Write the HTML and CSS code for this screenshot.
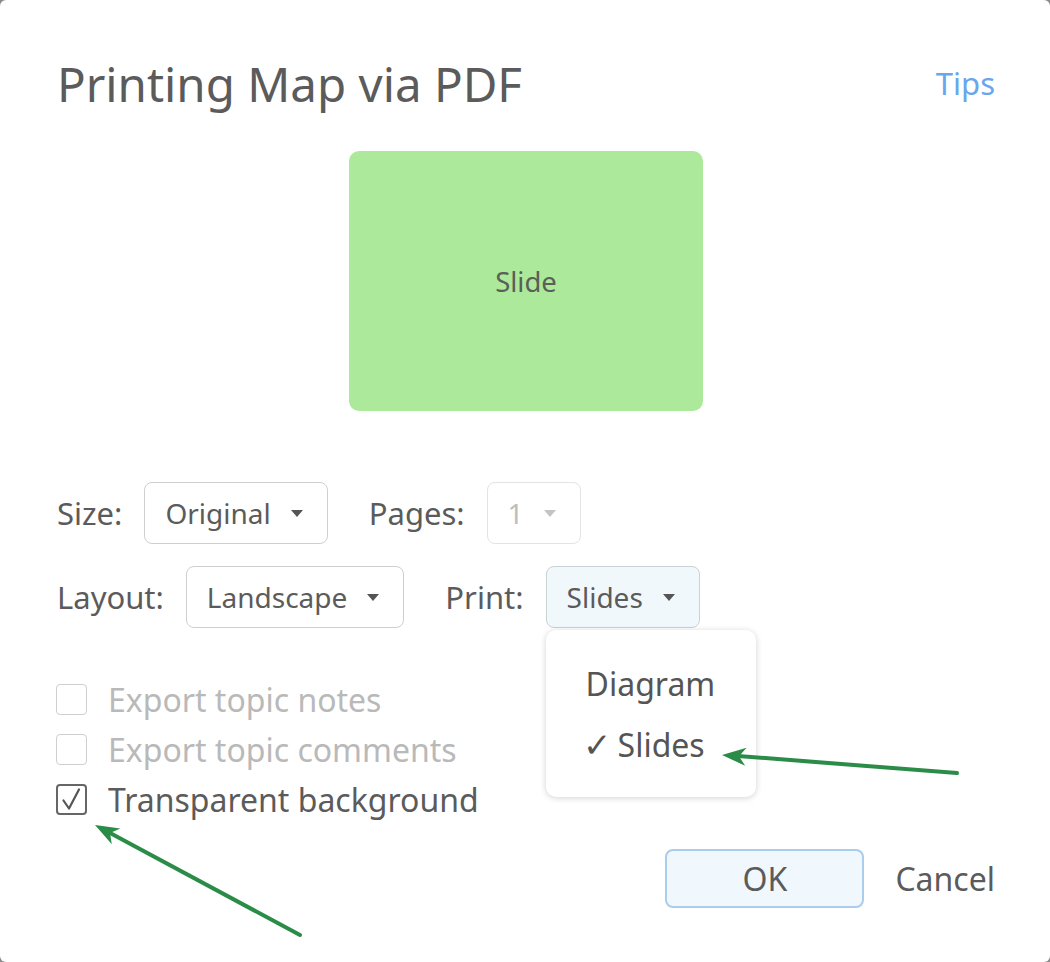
FILE: index.html
```html
<!DOCTYPE html>
<html>
<head>
<meta charset="utf-8">
<link rel="stylesheet" href="styles.css">
</head>
<body>
<div class="dialog">
  <div class="header">
    <h1 class="title">Printing Map via PDF</h1>
    <a class="tips">Tips</a>
  </div>
  <div class="preview">
    <div class="slide">Slide</div>
  </div>
  <div class="options">
    <div class="row">
      <div class="field">
        <span class="label">Size:</span>
        <div class="select select-size"><span>Original</span><i class="caret"></i></div>
      </div>
      <div class="field">
        <span class="label">Pages:</span>
        <div class="select select-pages disabled"><span>1</span><i class="caret"></i></div>
      </div>
    </div>
    <div class="row">
      <div class="field">
        <span class="label">Layout:</span>
        <div class="select select-layout"><span>Landscape</span><i class="caret"></i></div>
      </div>
      <div class="field">
        <span class="label">Print:</span>
        <div class="select-wrap">
          <div class="select select-print active"><span>Slides</span><i class="caret"></i></div>
          <div class="menu">
            <div class="menu-item">Diagram</div>
            <div class="menu-item"><span class="check">✓</span>Slides</div>
          </div>
        </div>
      </div>
    </div>
  </div>
  <div class="checks">
    <label class="check-row disabled"><span class="box"></span>Export topic notes</label>
    <label class="check-row disabled"><span class="box"></span>Export topic comments</label>
    <label class="check-row"><span class="box checked"><svg width="31" height="31" viewBox="0 0 31 31"><path d="M7.5 16.5 L13 24.5 L23 5.5" fill="none" stroke="#555" stroke-width="2.2" stroke-linecap="round" stroke-linejoin="round"/></svg></span>Transparent background</label>
  </div>
  <div class="footer">
    <button class="btn btn-ok">OK</button>
    <button class="btn btn-cancel">Cancel</button>
  </div>
  <svg class="annotations" width="1050" height="962" viewBox="0 0 1050 962">
    <g stroke="#2a8c47" stroke-width="4" fill="#2a8c47" stroke-linecap="round">
      <line x1="957" y1="773" x2="738" y2="756"/>
      <polygon points="722,755 746.6,747.8 739,756.3 745.2,765.8" stroke="none"/>
      <line x1="300" y1="935" x2="111" y2="833.5"/>
      <polygon points="95,825 120.4,828.5 110,833 111.8,844.3" stroke="none"/>
    </g>
  </svg>
</div>
</body>
</html>
```

FILE: styles.css
```css
* { box-sizing: border-box; }
html, body { margin: 0; padding: 0; }
body {
  background: #8a8a8a;
  font-family: "Noto Sans", "Open Sans", sans-serif;
  color: #5b5b5b;
}
.dialog {
  position: relative;
  width: 1050px;
  height: 962px;
  background: #fff;
  border-radius: 6px;
  padding: 0 55px 0 57px;
  overflow: hidden;
}
.header {
  display: flex;
  justify-content: space-between;
  align-items: center;
  padding-top: 52px;
}
.title {
  margin: 0;
  font-size: 47.5px;
  font-weight: 400;
  line-height: 64px;
  color: #5b5b5b;
}
.tips {
  font-size: 31px;
  color: #6aa6ec;
  cursor: pointer;
  margin-top: -3px;
}
.preview {
  display: flex;
  justify-content: center;
  margin-top: 35px;
}
.slide {
  width: 354px;
  height: 260px;
  background: #ace99a;
  border-radius: 10px;
  display: flex;
  align-items: center;
  justify-content: center;
  font-size: 27.5px;
  color: #5a5f58;
}
.options {
  margin-top: 71px;
  display: flex;
  flex-direction: column;
  gap: 22px;
}
.row {
  display: flex;
  gap: 41px;
}
.field {
  display: flex;
  align-items: center;
  gap: 22px;
}
.label {
  font-size: 31px;
  color: #5b5b5b;
}
.select {
  height: 62px;
  border: 1.5px solid #cfcfcf;
  border-radius: 8px;
  display: flex;
  align-items: center;
  padding: 0 24px 0 20px;
  gap: 20px;
  font-size: 28px;
  color: #5b5b5b;
  background: #fff;
}
.caret {
  width: 0;
  height: 0;
  border-left: 6px solid transparent;
  border-right: 6px solid transparent;
  border-top: 7px solid #555;
}
.select.disabled {
  border-color: #e3e3e3;
  color: #bdbdbd;
}
.select.disabled .caret { border-top-color: #c4c4c4; }
.select.active {
  background: #f1f8fc;
  border-color: #c9d2d6;
}
.select-wrap { position: relative; }
.menu {
  position: absolute;
  top: 64px;
  left: 0;
  width: 210px;
  height: 167px;
  background: #fff;
  border-radius: 10px;
  box-shadow: 0 1px 6px rgba(0,0,0,0.18);
  padding: 23px 0 0 40px;
  z-index: 2;
}
.menu-item {
  font-size: 32px;
  line-height: 61px;
  height: 61px;
  color: #555;
  white-space: nowrap;
}
.check { margin-right: 7px; margin-left: -3px; font-size: 34px; }
.checks {
  margin-top: 46px;
  display: flex;
  flex-direction: column;
}
.check-row {
  display: flex;
  align-items: center;
  height: 50px;
  font-size: 32px;
  color: #5b5b5b;
}
.check-row.disabled { color: #b9b9b9; }
.box {
  width: 31px;
  height: 31px;
  border: 1.5px solid #cfcfcf;
  border-radius: 4px;
  margin-right: 21px;
  margin-left: -1px;
  display: flex;
  align-items: center;
  justify-content: center;
  position: relative;
}
.box svg { position: absolute; left: -2px; top: -2px; }
.box.checked { border: 2px solid #666; }
.footer {
  display: flex;
  justify-content: flex-end;
  align-items: center;
  margin-top: 25px;
  gap: 31px;
}
.btn {
  font-family: inherit;
  font-size: 32px;
  color: #5b5b5b;
  background: none;
  border: none;
  padding: 0;
}
.btn-ok {
  width: 199px;
  height: 59px;
  background: #f0f8fd;
  border: 2px solid #a9cdeb;
  border-radius: 8px;
}
.annotations {
  position: absolute;
  left: 0;
  top: 0;
  z-index: 5;
  pointer-events: none;
}
```
